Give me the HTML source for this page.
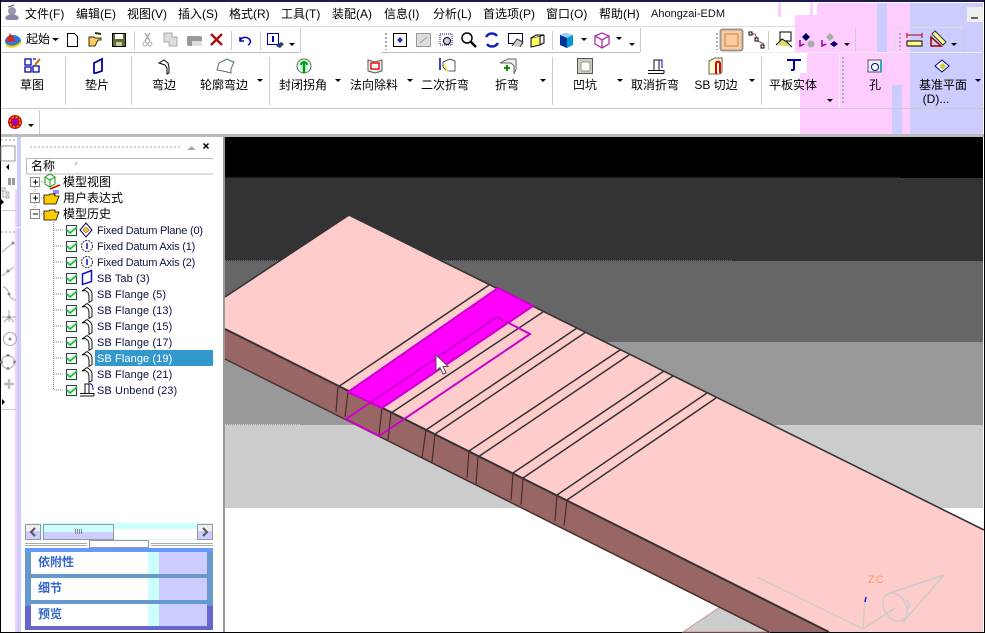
<!DOCTYPE html>
<html><head><meta charset="utf-8"><style>
html,body{margin:0;padding:0;background:#fff}
#p{position:relative;width:985px;height:633px;overflow:hidden;background:#fff;font:12px/16px "Liberation Sans","WenQuanYi Zen Hei","Noto Sans CJK SC",sans-serif;color:#000}
#p span{position:absolute;white-space:nowrap}
.c{transform:translateX(-50%)}
.t{font-size:11px;color:#0c1440;letter-spacing:.1px}
.f{letter-spacing:-.2px}
.b{font-weight:bold;color:#3366cc}
svg{position:absolute;left:0;top:0}
</style></head><body><div id="p">
<svg width="985" height="633" viewBox="0 0 985 633">
<!-- mottled background -->
<g shape-rendering="crispEdges">
<rect x="817" y="3" width="93" height="12" fill="#fcf"/>
<rect x="795" y="15" width="115" height="119" fill="#fcf"/>
<rect x="910" y="3" width="73" height="131" fill="#ccf"/>
<rect x="877" y="3" width="10" height="50" fill="#ccf"/>
<rect x="892" y="85" width="10" height="49" fill="#ccf"/>
<rect x="795" y="53" width="12" height="20" fill="#fff"/>
<rect x="795" y="73" width="5" height="61" fill="#fff"/>
<rect x="810" y="3" width="3" height="12" fill="#fcf"/>
<rect x="778" y="3" width="3" height="14" fill="#fcf"/>
<rect x="0" y="26" width="795" height="1" fill="#ddd"/>
<rect x="0" y="52" width="300" height="1" fill="#bbb"/>
<rect x="382" y="52" width="258" height="1" fill="#bbb"/>
<rect x="713" y="52" width="271" height="1" fill="#eee"/>
<rect x="300" y="28" width="1" height="24" fill="#ccc"/>
<rect x="640" y="28" width="1" height="24" fill="#ccc"/>
<rect x="855" y="28" width="1" height="24" fill="#ccc"/>
<rect x="895" y="28" width="1" height="24" fill="#ddd"/>
<rect x="963" y="28" width="1" height="24" fill="#ccc"/>
<rect x="895" y="27" width="68" height="1" fill="#ddd"/>
<rect x="1" y="108" width="983" height="1" fill="#ccc"/>
<rect x="1" y="134" width="983" height="3" fill="#bbb"/>
<rect x="39" y="110" width="1" height="24" fill="#ccc"/>
<path d="M65.500 57V105M131.500 57V105M269.500 57V105M552.500 57V105M761.500 57V105" stroke="#ccc" fill="none"/>
<path d="M839.500 54V108" stroke="#eee"/>
<path d="M134.500 31V50M231.500 31V50M260.500 31V50M552.500 31V50M768.500 31V50" stroke="#ccc"/>
<!-- title bar edges -->
<rect x="0" y="0" width="985" height="2" fill="#1c1a50"/>
<rect x="0" y="0" width="1" height="633" fill="#000"/>
<rect x="984" y="0" width="1" height="633" fill="#000"/>
<rect x="967" y="7" width="16" height="15" fill="#eee"/>
<rect x="971" y="17" width="7" height="2" fill="#666"/>
<!-- left strip -->
<rect x="1" y="137" width="15" height="496" fill="#fff"/>
<rect x="15" y="190" width="3" height="442" fill="#fcf"/>
<rect x="17" y="137" width="4" height="495" fill="#ccf"/>
<rect x="1" y="146" width="14" height="15" fill="#fff" stroke="#999"/>
<rect x="1" y="210" width="15" height="1" fill="#ccc"/>
<rect x="1" y="409" width="15" height="1" fill="#ccc"/>
<rect x="15" y="227" width="6" height="1" fill="#fff"/>
<rect x="21" y="137" width="202" height="495" fill="#fff"/>
<rect x="223" y="137" width="2" height="495" fill="#999"/>
</g>
<path d="M1 140H15M1 232H15" stroke="#999" stroke-dasharray="2 2"/>
<path d="M9 164l-3 3 3 3zM1 199l3 3-3 3zM2 399l3 3-3 3z" fill="#000"/>
<g stroke="#aaa" fill="none" stroke-width="1">
<path d="M2 252L13 243M2 276L14 267M3 287C11 288 6 299 16 300M2 317H16M9 310V322M4 322l5-5 5 5"/>
<circle cx="10" cy="339" r="6.500"/><circle cx="8" cy="362" r="6.500"/>
<path d="M4 384H14M9 379V389" stroke-width="2.500" stroke="#bbb"/>
<path d="M2 188h3v3H2zM6 192h3v2H6zM6 196h3v2H6zM3 191v6h3"/>
</g>
<path d="M8 178h3v7H8zM12 178h3v7h-3z" fill="#999"/>
<g fill="#888"><circle cx="13" cy="243" r="1.500"/><circle cx="8" cy="271" r="1.500"/><circle cx="10" cy="339" r="1.500"/><circle cx="9" cy="294" r="1.500"/><circle cx="9" cy="317" r="1.500"/><circle cx="8" cy="355.500" r="1.500"/><circle cx="8" cy="368.500" r="1.500"/><circle cx="1.500" cy="362" r="1.500"/><circle cx="14.500" cy="362" r="1.500"/></g>
<!-- viewport -->
<g shape-rendering="crispEdges">
<rect x="225" y="137" width="758" height="41" fill="#000"/>
<rect x="225" y="178" width="758" height="83" fill="#333"/>
<rect x="225" y="261" width="758" height="81" fill="#666"/>
<rect x="225" y="342" width="758" height="83" fill="#999"/>
<rect x="225" y="425" width="758" height="83" fill="#ccc"/>
<rect x="225" y="508" width="758" height="124" fill="#fff"/>
<rect x="0" y="632" width="985" height="1" fill="#000"/>
<path d="M225 177.500H901" stroke="#333" stroke-dasharray="1 1"/>
<path d="M225 177H901" stroke="#333" stroke-width=".1"/>
<path d="M225 260.500H732" stroke="#666" stroke-dasharray="1 1"/>
<path d="M225 424.500H300" stroke="#ccc" stroke-dasharray="1 1"/>
</g>
<path d="M720 607L683 632H770Z" fill="#ccc" stroke="#c99"/>
<path d="M225 329L830 632H770L225 359Z" fill="#966"/>
<path d="M349 215L983 529V632H830L225 329V297Z" fill="#fcc"/>
<path d="M225 297L349 215L984 530" fill="none" stroke="#333" stroke-width="1.600"/>
<path d="M225 329L829 632" fill="none" stroke="#333" stroke-width="2"/>
<path d="M225 359L769 632" fill="none" stroke="#4a3030" stroke-width="1.500"/>
<g stroke="#333" stroke-width="1.500" fill="none">
<path d="M338 387L489 285M391 413L543 312M426 430L577 328M435 434L586 332M469 451L620 350M478 457L629 355M513 473L664 371M523 478L673 376M557 495L707 393M567 500L716 398"/>
<path d="M338 387L336 412M348 392L345 417M382 408L379 435M391 413L388 440M426 430L422 458M435 434L432 462M469 451L467 478M478 457L476 484M513 473L511 500M523 478L521 505M557 495L555 521M567 500L564 526" stroke="#4a2c2c" stroke-width="1.200"/>
</g>
<path d="M348 392L498 288L533 306L382 408Z" fill="#f0f" stroke="#c0c" stroke-width="2"/>
<path d="M497 317L530 334L379 436L346 419Z" fill="none" stroke="#c0c" stroke-width="2"/>
<path d="M436 355V371L440 367.500L443 374L446 373L443 366.500H448Z" fill="#fff" stroke="#555"/>
<g stroke="#ccc" stroke-width="1.500" fill="none">
<path d="M757 577L863 629M863 629L895 608M863 629L865 600" />
<path d="M944 575L890 593M944 575L903 622"/>
<ellipse cx="895" cy="607" rx="11" ry="15" transform="rotate(-30 895 607)"/>
<path d="M906 600c3 1 4 5 2 9"/>
</g>
<path d="M866 597L865 602" stroke="#22c" stroke-width="1.500"/>
<!-- panel -->
<path d="M30 147H180" stroke="#aaa" stroke-dasharray="2 2"/>
<path d="M187 150h9l-4.500-4z" fill="#aaa"/>
<path d="M203.500 143.500l5 5m0-5l-5 5" stroke="#000" stroke-width="1.500"/>
<path d="M26.500 174V158.500H213M26 174H213" stroke="#bbb" fill="none"/>
<path d="M75 165l2-3" stroke="#999"/>
<path d="M35 187V210" stroke="#888" stroke-dasharray="1 1"/>
<path d="M53.500 222V390M39 182H44M39 198H44M39 214H44M54 230H64M54 246H64M54 262H64M54 278H64M54 294H64M54 310H64M54 326H64M54 342H64M54 358H64M54 374H64M54 390H64" stroke="#888" stroke-dasharray="1 1" fill="none"/>
<g fill="#fff" stroke="#888"><rect x="30.500" y="177.500" width="9" height="9"/><rect x="30.500" y="193.500" width="9" height="9"/><rect x="30.500" y="209.500" width="9" height="9"/></g>
<path d="M33 182H38M35.500 179.500V184.500M33 198H38M35.500 195.500V200.500M33 214H38" stroke="#000"/>
<path d="M45 177l5-3 5 3v7l-5 3-5-3zM45 177l5 3 5-3M50 180v7" fill="none" stroke="#190" />
<path d="M50 189l10-4" stroke="#d00" stroke-width="1.500"/>
<path d="M44 204v-9h5l1-1h5v2h4l-3 8z" fill="#fc0" stroke="#000" stroke-width=".8"/>
<path d="M44 220v-9h5l1-1h5v2h4l-3 8z" fill="#fc0" stroke="#000" stroke-width=".8"/>
<path d="M53 191h6M53 193h6" stroke="#22d"/>
<!-- tree rows: checks -->
<g fill="#fff" stroke="#335" stroke-width="1"><rect x="66.500" y="225.500" width="10" height="10"/><rect x="66.500" y="241.500" width="10" height="10"/><rect x="66.500" y="257.500" width="10" height="10"/><rect x="66.500" y="273.500" width="10" height="10"/><rect x="66.500" y="289.500" width="10" height="10"/><rect x="66.500" y="305.500" width="10" height="10"/><rect x="66.500" y="321.500" width="10" height="10"/><rect x="66.500" y="337.500" width="10" height="10"/><rect x="66.500" y="353.500" width="10" height="10"/><rect x="66.500" y="369.500" width="10" height="10"/><rect x="66.500" y="385.500" width="10" height="10"/></g>
<path d="M67 230l3 3 7-6M67 246l3 3 7-6M67 262l3 3 7-6M67 278l3 3 7-6M67 294l3 3 7-6M67 310l3 3 7-6M67 326l3 3 7-6M67 342l3 3 7-6M67 358l3 3 7-6M67 374l3 3 7-6M67 390l3 3 7-6" fill="none" stroke="#2c3" stroke-width="2"/>
<path d="M86 223l6 7-6 7-6-7z" fill="#fff" stroke="#006"/><path d="M83 230l3-3 3 3-3 3z" fill="#fc3" stroke="#850" stroke-width=".6"/>
<g fill="none" stroke="#224"><circle cx="87" cy="246" r="5.500" stroke-dasharray="2 1"/><circle cx="87" cy="262" r="5.500" stroke-dasharray="2 1"/></g>
<path d="M87 243v6M87 259v6" stroke="#11c" stroke-width="1.500"/>
<path d="M82.500 274l9-3.500v11l-9 3z" fill="none" stroke="#11c" stroke-width="1.500"/>
<g fill="none" stroke="#111"><path d="M82 291l5-3.500 4 3 1 3v7l-3 2v-7l-1-3-3-2z"/><path d="M82 307l5-3.500 4 3 1 3v7l-3 2v-7l-1-3-3-2z"/><path d="M82 323l5-3.500 4 3 1 3v7l-3 2v-7l-1-3-3-2z"/><path d="M82 339l5-3.500 4 3 1 3v7l-3 2v-7l-1-3-3-2z"/><path d="M82 355l5-3.500 4 3 1 3v7l-3 2v-7l-1-3-3-2z"/><path d="M82 371l5-3.500 4 3 1 3v7l-3 2v-7l-1-3-3-2z"/></g>
<path d="M80 396h14M80 393.500h14v2.500M85 393v-9h4v9" fill="none" stroke="#111"/><path d="M89 384c3-1 4 2 4 6" fill="none" stroke="#11c"/>
<rect x="95" y="350" width="118" height="16" fill="#39c" shape-rendering="crispEdges"/>
<!-- scrollbar -->
<g shape-rendering="crispEdges">
<rect x="25" y="523" width="188" height="17" fill="#cff"/>
<rect x="43" y="529" width="154" height="10" fill="#fff"/>
<rect x="25.500" y="524.500" width="15" height="15" fill="#eee" stroke="#999"/>
<rect x="197.500" y="524.500" width="15" height="15" fill="#eee" stroke="#999"/>
<rect x="26" y="531" width="14" height="8" fill="#ccf"/><rect x="198" y="531" width="14" height="8" fill="#ccf"/>
<rect x="43.500" y="524.500" width="70" height="15" fill="#cff" stroke="#999"/>
<rect x="44" y="532" width="69" height="7" fill="#ccf"/>
<path d="M75.500 529v5M77.500 529v5M79.500 529v5M81.500 529v5" stroke="#888"/>
<rect x="89.500" y="540.500" width="59" height="7" fill="#fff" stroke="#999"/>
<path d="M25 543.500H87M151 543.500H213M25 545.500H87M151 545.500H213" stroke="#aaa"/>
<rect x="25" y="548" width="188" height="82" fill="#69c"/>
<rect x="25" y="548" width="188" height="4" fill="#69f"/>
<rect x="25" y="606" width="188" height="24" fill="#66c"/>
<rect x="31" y="552" width="176" height="22" fill="#fff"/><rect x="31" y="578" width="176" height="22" fill="#fff"/><rect x="31" y="604" width="176" height="22" fill="#fff"/>
<rect x="148" y="552" width="11" height="22" fill="#cff"/><rect x="148" y="578" width="11" height="22" fill="#cff"/><rect x="148" y="604" width="11" height="22" fill="#cff"/>
<rect x="159" y="552" width="48" height="22" fill="#ccf"/><rect x="159" y="578" width="48" height="22" fill="#ccf"/><rect x="159" y="604" width="48" height="22" fill="#ccf"/>
</g>
<path d="M35 528l-4 4 4 4" fill="none" stroke="#555" stroke-width="2"/><path d="M203 528l4 4-4 4" fill="none" stroke="#555" stroke-width="2"/>
<!-- toolbar icons row 2 -->
<circle cx="12" cy="11" r="4" fill="#99a"/><path d="M5 18c2-5 12-5 14 0l-2 2H7z" fill="#88a"/><path d="M8 7l6-2" stroke="#447"/>
<ellipse cx="13" cy="41" rx="8" ry="6" fill="#2a7ad0"/><path d="M6 42l4-9 6 8z" fill="#d22"/><path d="M6 45c5 3 11 2 15-3" stroke="#fc0" stroke-width="2" fill="none"/>
<path d="M52 38h7l-3.500 3z M289 43h6l-3 3z"/>
<path d="M67.500 33.500h7l3 3v10h-10z" fill="#fff" stroke="#000"/>
<path d="M89 46v-9h5l1 1h6v2h-3l-3 6z" fill="#fc6" stroke="#330"/><path d="M95 33l6 1" stroke="#330" stroke-width="2"/>
<rect x="112.500" y="33.500" width="13" height="13" fill="#663" stroke="#000"/><rect x="115" y="34" width="8" height="5" fill="#fff"/><rect x="116" y="42" width="6" height="4" fill="#cc9"/>
<path d="M145 33l5 8M150 33l-5 8" stroke="#aaa" stroke-width="1.500"/><circle cx="145" cy="44" r="2" fill="none" stroke="#aaa"/><circle cx="150" cy="44" r="2" fill="none" stroke="#aaa"/>
<path d="M164 33h8v4h5v9h-8v-4h-5z" fill="#ddd" stroke="#aaa"/>
<rect x="187" y="36" width="15" height="10" rx="2" fill="#999"/><rect x="192" y="41" width="10" height="5" fill="#ddd"/>
<path d="M211 34l11 11M222 34l-11 11" stroke="#a11" stroke-width="2.500"/>
<path d="M240 40c3-4 8-3 10 0 1 2 0 4-2 5M240 37v4h4" fill="none" stroke="#00a" stroke-width="1.500"/>
<rect x="267.500" y="33.500" width="11" height="11" fill="#fff" stroke="#00a"/><path d="M273 36v6" stroke="#00a" stroke-width="2"/><path d="M276 46l5-4 3 2-4 4z" fill="#246"/>
<!-- view toolbar -->
<path d="M386 33v17" stroke="#aab" stroke-width="2" stroke-dasharray="2 2"/>
<rect x="393.500" y="33.500" width="13" height="13" fill="#fff" stroke="#000"/><path d="M397 40l3-3 3 3-3 3z" fill="#23a"/>
<rect x="416.500" y="33.500" width="14" height="13" fill="#ddd" stroke="#999"/><path d="M420 43l7-6" stroke="#999"/>
<rect x="440" y="34" width="12" height="11" fill="none" stroke="#00a" stroke-dasharray="1 1"/><circle cx="447" cy="41" r="3.500" fill="#ccd" stroke="#000"/>
<circle cx="467" cy="38" r="5" fill="#fff" stroke="#000" stroke-width="1.500"/><path d="M471 42l5 5" stroke="#000" stroke-width="2.500"/>
<path d="M486 37c3-5 9-4 11-1M498 43c-3 5-9 4-11 1" fill="none" stroke="#12b" stroke-width="2.500"/>
<rect x="508.500" y="33.500" width="14" height="10" fill="#fff" stroke="#003"/><path d="M512 46l5-7 6 3-3 5" fill="#ccc" stroke="#333"/>
<path d="M531 38l9-2v9l-9 2z" fill="#ff6" stroke="#000"/><path d="M531 38l5-3h8l-4 1M544 35v8l-4 2" fill="#eee" stroke="#000"/>
<path d="M560 35l6-2 7 2v10l-6 3-7-3z" fill="#09c"/><path d="M560 35l7 3 6-3-6-2z" fill="#9cf"/><path d="M560 35v10l7 3V38z" fill="#039"/>
<path d="M595 36l7-3 7 3v8l-7 4-7-4zM595 36l7 4 7-4M602 40v8" fill="none" stroke="#a3a" stroke-width="1.300"/>
<path d="M581 38h6l-3 3zM616 37h6l-3 3zM629 43h6l-3 3zM844 43h6l-3 3zM951 43h6l-3 3zM257 79h6l-3 3zM335 79h6l-3 3zM407 79h6l-3 3zM540 79h6l-3 3zM617 79h6l-3 3zM749 79h6l-3 3zM827 99h6l-3 3zM975 79h6l-3 3zM28 124h6l-3 3z"/>
<!-- active + right toolbars -->
<path d="M717 33v17M900 33v17M843 57v48" stroke="#aab" stroke-width="2" stroke-dasharray="2 2"/>
<rect x="720.500" y="29.500" width="22" height="21" rx="2" fill="#fc9" stroke="#999" stroke-width="2"/><rect x="725" y="34" width="13" height="12" fill="#fc9" stroke="#a86"/>
<path d="M750 34h5l3 7 6 3" fill="none" stroke="#a33"/><g fill="#fff" stroke="#000"><rect x="749" y="32" width="3" height="3"/><rect x="755" y="38" width="3" height="3"/><rect x="761" y="45" width="3" height="3"/></g>
<rect x="780" y="32" width="11" height="9" fill="#fff" stroke="#000"/><path d="M776 45l6-6 5 3 5 5" fill="#dd6" stroke="#000"/>
<path d="M802 37l4-4 4 4-4 4z" fill="#006"/><path d="M800 40v6l4-2" fill="none" stroke="#909" stroke-width="1.500"/><circle cx="811" cy="44" r="3.500" fill="#aaa"/>
<path d="M826 37l4-4 4 4-4 4z" fill="#aaa"/><path d="M822 40v6l4-2" fill="none" stroke="#909" stroke-width="1.500"/><path d="M830 44l4-3 4 3-4 3z" fill="#006"/>
<path d="M907 35h15M907 33v5M922 33v5" stroke="#a00"/><rect x="907" y="41" width="15" height="5" fill="#ff8" stroke="#000"/>
<path d="M931 37v9h10z" fill="none" stroke="#900" stroke-width="1.500"/><path d="M932 34l3-3 11 11-3 3z" fill="#ff9" stroke="#333"/>
<!-- ribbon icons -->
<g fill="none" stroke="#00a" stroke-width="1.300">
<rect x="25" y="59" width="6" height="6"/><path d="M25 67h6v5h-6zM33 66h6v6h-6zM33 59h3"/>
<path d="M94 63l8-4v12l-6 2h-2z" stroke-width="1.800"/>
<path d="M787 60h14M794 60v10M794 70h-3" stroke="#00a" stroke-width="2"/>
</g>
<path d="M35 65l5-6" stroke="#c60" stroke-width="2"/>
<path d="M159 63l5-3 4 3 1 4v6l-2 1v-6l-2-3-3-1z" fill="#fff" stroke="#000"/>
<path d="M219 63l8-4 7 3-3 7 0 4-8-2-6-1z" fill="#fff" stroke="#666"/><path d="M226 59l7 3" stroke="#4aa"/>
<circle cx="304" cy="66" r="7" fill="#dfe" stroke="#666"/><path d="M304 62v11" stroke="#090" stroke-width="2.500"/><path d="M301 65a3 3 0 0 1 6 0" stroke="#090" stroke-width="2" fill="none"/>
<path d="M368 60l7 2 7-2v11l-7 2-7-2z" fill="#eee" stroke="#555"/><rect x="371" y="63" width="8" height="6" fill="#fff" stroke="#e11" stroke-width="1.500"/>
<path d="M443 62l7-3 5 2v10h-8l-4-4z" fill="#fff" stroke="#555"/><path d="M440 58v12" stroke="#00a" stroke-width="1.500"/><path d="M444 64l4 8" stroke="#ee6" stroke-width="2"/>
<path d="M500 63l8-4h8v10l-2 5v-8l-3-3z" fill="#eee" stroke="#666"/><path d="M504 68h6M507 65v6" stroke="#090" stroke-width="2"/>
<rect x="577.500" y="58.500" width="15" height="15" fill="#ccc" stroke="#555"/><rect x="581" y="62" width="9" height="9" rx="2" fill="#fff" stroke="#996"/>
<path d="M648 73.500h16M648 70.500h16v3M654 70v-10h5v10" fill="none" stroke="#111"/><path d="M659 60h3v8" fill="none" stroke="#00a"/>
<path d="M709 61l6-3h7v14l-2 2h-11z" fill="#ffc" stroke="#666"/><path d="M716 74v-10c0-3 3-3 4-1v10" fill="none" stroke="#d00" stroke-width="2"/>
<path d="M868 60h13v12h-13z" fill="#eee" stroke="#555"/><circle cx="875" cy="67" r="3.500" fill="#fff" stroke="#00a"/><path d="M881 60v12" stroke="#3aa" stroke-width="2"/>
<path d="M942 60l7 6-7 6-7-6z" fill="#fff" stroke="#00a"/><path d="M939 66l4-3 3 3-3 4z" fill="#cc3"/>
<circle cx="15" cy="122" r="7" fill="#c11"/><circle cx="15" cy="122" r="3" fill="#90c"/><circle cx="15" cy="122" r="5" fill="none" stroke="#fc0" stroke-dasharray="2 2"/>
</svg>
<span style="left:25px;top:6px">文件(F)</span><span style="left:76px;top:6px">编辑(E)</span><span style="left:127px;top:6px">视图(V)</span><span style="left:178px;top:6px">插入(S)</span><span style="left:229px;top:6px">格式(R)</span><span style="left:281px;top:6px">工具(T)</span><span style="left:332px;top:6px">装配(A)</span><span style="left:384px;top:6px">信息(I)</span><span style="left:433px;top:6px">分析(L)</span><span style="left:483px;top:6px">首选项(P)</span><span style="left:546px;top:6px">窗口(O)</span><span style="left:599px;top:6px">帮助(H)</span><span style="left:651px;top:6px;font-size:11px;color:#112">Ahongzai-EDM</span>
<span style="left:26px;top:31px">起始</span>
<span class="c" style="left:32px;top:77px">草图</span><span class="c" style="left:97px;top:77px">垫片</span><span class="c" style="left:164px;top:77px">弯边</span><span class="c" style="left:224px;top:77px">轮廓弯边</span><span class="c" style="left:303px;top:77px">封闭拐角</span><span class="c" style="left:374px;top:77px">法向除料</span><span class="c" style="left:445px;top:77px">二次折弯</span><span class="c" style="left:507px;top:77px">折弯</span><span class="c" style="left:585px;top:77px">凹坑</span><span class="c" style="left:655px;top:77px">取消折弯</span><span class="c" style="left:716px;top:77px">SB 切边</span><span class="c" style="left:793px;top:77px">平板实体</span><span class="c" style="left:875px;top:77px">孔</span><span class="c" style="left:943px;top:77px">基准平面</span><span class="c" style="left:936px;top:91px">(D)...</span>
<span style="left:31px;top:158px">名称</span>
<span style="left:63px;top:174px">模型视图</span><span style="left:63px;top:190px">用户表达式</span><span style="left:63px;top:206px">模型历史</span>
<span class="t f" style="left:97px;top:223px">Fixed Datum Plane (0)</span><span class="t f" style="left:97px;top:239px">Fixed Datum Axis (1)</span><span class="t f" style="left:97px;top:255px">Fixed Datum Axis (2)</span><span class="t" style="left:97px;top:271px">SB Tab (3)</span><span class="t" style="left:97px;top:287px">SB Flange (5)</span><span class="t" style="left:97px;top:303px">SB Flange (13)</span><span class="t" style="left:97px;top:319px">SB Flange (15)</span><span class="t" style="left:97px;top:335px">SB Flange (17)</span><span class="t" style="left:97px;top:351px;color:#fff">SB Flange (19)</span><span class="t" style="left:97px;top:367px">SB Flange (21)</span><span class="t" style="left:97px;top:383px">SB Unbend (23)</span>
<span class="b" style="left:38px;top:554px">依附性</span><span class="b" style="left:38px;top:580px">细节</span><span class="b" style="left:38px;top:606px">预览</span>
<span style="left:868px;top:572px;font-size:11px;color:#f96;letter-spacing:1px">ZC</span>
</div></body></html>
